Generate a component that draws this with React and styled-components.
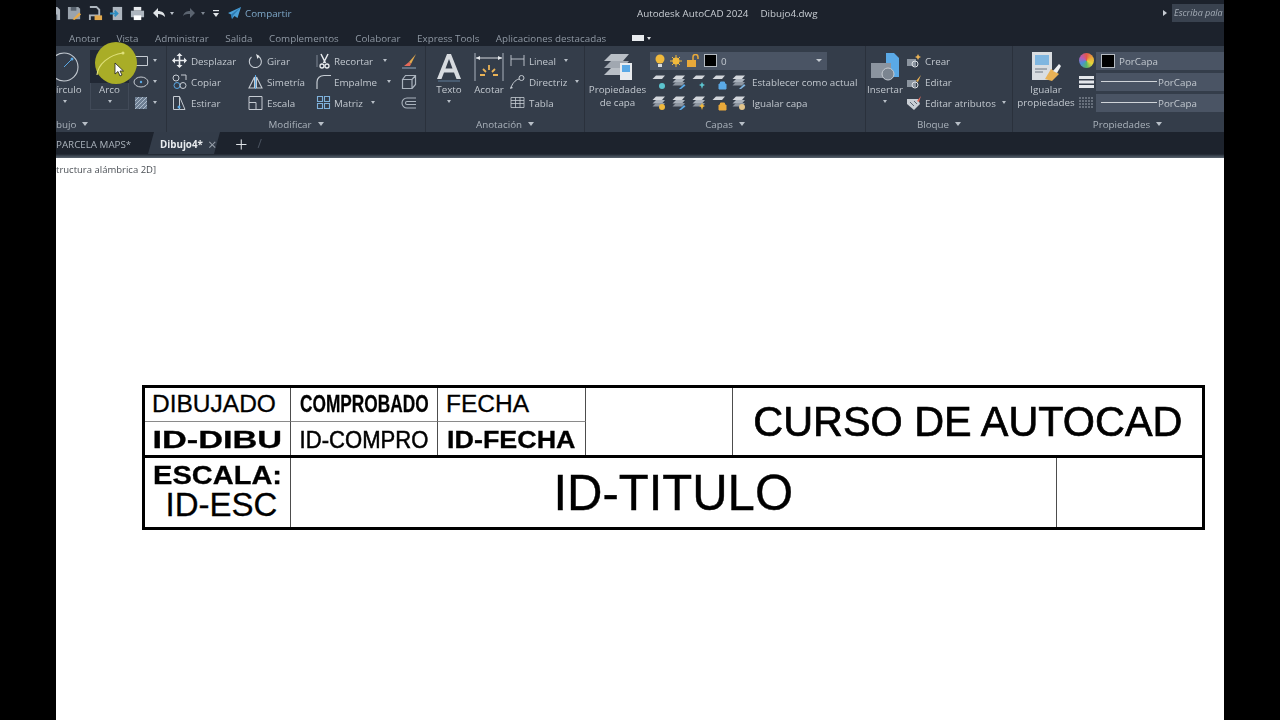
import React from "react";
import styled, { createGlobalStyle } from "styled-components";

const GlobalStyle = createGlobalStyle`
  html, body {
    margin: 0;
    height: 100%;
    background: #000;
    overflow: hidden;
    font-family: "Open Sans", "Noto Sans", sans-serif;
  }
`;

const Svg = ({ w = 16, h = 16, children }) => (
  <svg width={w} height={h} viewBox={`0 0 ${w} ${h}`} fill="none" style={{ flex: "none", display: "block" }}>
    {children}
  </svg>
);

const G = "#c5cbd2";

const icons = {
  save: <Svg><path d="M1 1h11l3 3v11H1z" fill="#aeb6bf" /><path d="M4 1h6v4H4zM4 9h8v6H4z" fill="#59636f" /></Svg>,
  saveAs: <Svg><path d="M1 1h11l2 2v11H1z" fill="#9aa3ad" /><path d="M4 1h6v4H4z" fill="#59636f" /><path d="M6 14l7-7 2 2-7 6z" fill="#e7a948" /></Svg>,
  open: <Svg><path d="M2 1h7l3 3v6H2v5" stroke="#aeb6bf" strokeWidth="2" /><path d="M7 10h8v5H7z" fill="#e2a94e" /></Svg>,
  export: <Svg><path d="M4 1h10v14H4z" fill="#aeb6bf" /><path d="M1 8h7M6 5l3 3-3 3" stroke="#2f8fc4" strokeWidth="2" /></Svg>,
  print: <Svg><path d="M4 1h8v4H4z" fill="#e8ebee" /><path d="M1 5h14v7H1z" fill="#aeb6bf" /><path d="M4 10h8v5H4z" fill="#fff" /></Svg>,
  undo: <Svg w={14} h={12}><path d="M1 6l5-5v3c4 0 7 2 7 6-2-2-4-3-7-3v4z" fill="#dfe3e7" /></Svg>,
  redo: <Svg w={14} h={12}><path d="M13 6L8 1v3C5 4 2 5 1 9c2-2 4-2 7-2v4z" fill="#5b6470" /></Svg>,
  menu: <Svg w={6} h={9}><path d="M0 1h6v1.200H0z" fill="#dfe3e7" /><path d="M0 4h6L3 8z" fill="#dfe3e7" /></Svg>,
  plane: <Svg w={15} h={14}><path d="M14 1L1 7l3 1.500 1 4.500 2.500-3 3 2z" fill="#4aa0d8" /><path d="M14 1L4 8.500l1 4.500 1-3.500z" fill="#2c78b0" /></Svg>,
  move: <Svg w={15} h={15}><path d="M7.500 1v13M1 7.500h13" stroke="#e8ebee" strokeWidth="1.600" /><path d="M7.500 0l3 3h-6zM7.500 15l-3-3h6zM0 7.500l3-3v6zM15 7.500l-3 3v-6z" fill="#e8ebee" /></Svg>,
  rotate: <Svg w={15} h={15}><path d="M10.500 3.500A6 6 0 1 1 3.500 4" stroke={G} strokeWidth="1.100" /><path d="M8 1l3.500 2-2 3z" fill="#e8ebee" /></Svg>,
  trim: <Svg w={15} h={16}><path d="M5 1l4.500 9M12 1L7.500 10" stroke="#e8ebee" strokeWidth="1.500" /><circle cx="6" cy="13" r="2" stroke="#e8ebee" strokeWidth="1.300" /><circle cx="11" cy="13" r="2" stroke="#e8ebee" strokeWidth="1.300" /><path d="M1 2v12" stroke="#7e8894" /></Svg>,
  brush: <Svg><path d="M15 1L8 9l2 2z" fill="#e2a94e" /><path d="M8 9l-5 4 6 0 1-2z" fill="#e56a5a" /><path d="M1 15h14" stroke="#8fa8bd" /></Svg>,
  copy: <Svg w={15} h={15}><circle cx="4" cy="4" r="3" stroke={G} /><path d="M9 1h5v5" stroke={G} /><circle cx="5" cy="11.500" r="3" stroke="#5aa9e6" /><circle cx="11" cy="11.500" r="3" stroke={G} /></Svg>,
  mirror: <Svg w={15} h={15}><path d="M6.500 3L1 14h5.500zM8.500 3v11H14z" stroke={G} strokeWidth="1.100" /><path d="M7.500 1v14" stroke="#5aa9e6" /></Svg>,
  fillet: <Svg w={15} h={15}><path d="M1 15V8c0-4 3-6.500 7-6.500h7" stroke={G} strokeWidth="1.200" /></Svg>,
  box3d: <Svg><path d="M1.500 5.500h9.500v9H1.500zM1.500 5.500l3-4h10v9l-3.500 4M11 5.500l3.500-4" stroke="#aab3bd" strokeWidth="1.200" /></Svg>,
  stretch: <Svg w={15} h={15}><path d="M1.500 1.500h6v13h-6z" stroke={G} /><path d="M7.500 1.500l5.500 13H7.500" stroke={G} /><circle cx="7" cy="12" r="1.500" fill="#5aa9e6" /></Svg>,
  scale: <Svg w={15} h={15}><path d="M1 7.500h7v7H1zM1 7.500v-6h13v13H8" stroke={G} strokeWidth="1" /></Svg>,
  array: <Svg w={15} h={15}><path d="M1.500 1.500h5v5h-5zM8.500 1.500h5v5h-5zM1.500 8.500h5v5h-5zM8.500 8.500h5v5h-5z" stroke="#7fb2dc" strokeWidth="1.100" /></Svg>,
  offset: <Svg><path d="M15 3H6a4 4 0 0 0 0 10h9M15 6.500H6a1.500 1.500 0 0 0 0 3h9" stroke="#aab3bd" strokeWidth="1.100" /></Svg>,
  rect: <Svg><path d="M1.500 3.500h13v9h-13z" stroke={G} /></Svg>,
  ellipse: <Svg><ellipse cx="8" cy="8" rx="7" ry="5" stroke={G} /><circle cx="8" cy="8" r="1.200" fill="#5aa9e6" /></Svg>,
  hatch: <Svg><path d="M2 2h12v12H2z" fill="#6d7e92" /><path d="M2 6l4-4M2 10l8-8M2 14L14 2M6 14l8-8M10 14l4-4" stroke="#aebccb" /></Svg>,
  linear: <Svg w={15} h={15}><path d="M1 2v11M14 2v11M1 6h13" stroke={G} strokeWidth=".9" /></Svg>,
  leader: <Svg w={15} h={15}><path d="M1 14c1-4 4-8 8-9" stroke={G} /><circle cx="11.500" cy="4" r="2.500" stroke={G} /><path d="M0 15l3-1-2-2z" fill={G} /></Svg>,
  table: <Svg w={15} h={15}><path d="M1 2.500h13v10H1zM1 5.500h13M1 8.500h13M5.500 2.500v10M10 2.500v10" stroke={G} strokeWidth=".8" /></Svg>,
  blockNew: <Svg><path d="M1 6h9v7H1z" fill="#8b949f" /><circle cx="9" cy="11" r="3" stroke="#dde1e5" /><path d="M12 1l1 2 2 1-2 1-1 2-1-2-2-1 2-1z" fill="#e9b256" /></Svg>,
  blockEdit: <Svg><path d="M1 6h9v7H1z" fill="#8b949f" /><circle cx="9" cy="11" r="3" stroke="#dde1e5" /><path d="M15 1l-5 6 2 1z" fill="#e9b256" /></Svg>,
  attrs: <Svg><path d="M1 4h11l2 5-6 6-7-6z" fill="#c9ced4" /><path d="M4 7l4 4M8 6l3 3" stroke="#5b6470" /><path d="M15 1l-4 5 2 1z" fill="#e56a5a" /></Svg>,
  weight: <Svg w={15} h={16}><path d="M0 2h15v3H0zM0 6.500h15v3H0zM0 11h15v3H0z" fill="#e3e6ea" /></Svg>,
  ltype: <Svg w={15} h={16}><path d="M0 3h15M0 6h15M0 9h15M0 12h15" stroke="#9aa3ad" strokeDasharray="2 1" /></Svg>,
};

function LayerIcon({ stacked, accent, kind }) {
  return (
    <Svg w={16} h={16}>
      {stacked && <path d="M5 5h9l-3 3.500H1.500z" fill="#aab2bc" />}
      {stacked && <path d="M5 8h9l-3 3.500H1.500z" fill="#8d96a1" />}
      <path d="M5 1.500h9L11 5H1.500z" fill="#d3d7dc" />
      {kind === "bulb" && <circle cx="11" cy="12" r="3" fill={accent} />}
      {kind === "lock" && <path d="M8 10h7v5H8zM9.500 10V8h4v2" fill={accent} stroke={accent} />}
      {kind === "sun" && <path d="M11 8l1 2 2 1-2 1-1 3-1-3-2-1 2-1z" fill={accent} />}
      {kind === "pen" && <path d="M8 15l5-5 1.500 1.500L10 15z" fill={accent} />}
    </Svg>
  );
}

const AppFrame = styled.div`
  width: 1168px;
  height: 720px;
  margin: 0 56px;
  display: flex;
  flex-direction: column;
  overflow: hidden;
  background: #fff;
  position: relative;
`;

const Chrome = styled.header`
  flex: none;
  filter: blur(0.3px);
`;

const TitleBar = styled.div`
  height: 26px;
  display: flex;
  align-items: center;
  background: #1c222c;
`;

const QuickTools = styled.div`
  width: 581px;
  flex: none;
  display: flex;
  align-items: center;
  margin-left: -10px;
  margin-right: 10px;
`;

const FileIcons = styled.div`
  display: flex;
  gap: 6px;

  svg {
    width: 15px;
    height: 15px;
  }
`;

const QuickIcon = styled.span`
  display: block;
  flex: none;
  margin-left: ${(p) => p.$ml}px;
`;

const Tiny = styled.span`
  width: 0;
  height: 0;
  flex: none;
  border-left: 2.5px solid transparent;
  border-right: 2.5px solid transparent;
  border-top: 3px solid ${(p) => p.$color || "#b8bfc7"};
  margin: ${(p) => p.$margin || "0"};
`;

const Share = styled.span`
  color: #7da7c8;
  font-size: 9.8px;
  margin-left: 3px;
`;

const AppTitle = styled.div`
  display: flex;
  gap: 12px;
  color: #c9ced4;
  font-size: 9.8px;
`;

const SearchZone = styled.div`
  margin-left: auto;
  display: flex;
  align-items: center;
  gap: 5px;
`;

const PlayMark = styled.span`
  width: 0;
  height: 0;
  border-top: 3.5px solid transparent;
  border-bottom: 3.5px solid transparent;
  border-left: 4px solid #c5cbd2;
`;

const SearchBox = styled.div`
  width: 52px;
  height: 18px;
  background: #39424f;
  color: #a4acb6;
  font-size: 9px;
  font-style: italic;
  line-height: 18px;
  padding-left: 2px;
  white-space: nowrap;
  overflow: hidden;
  box-sizing: border-box;
`;

const TabBar = styled.nav`
  height: 20px;
  display: flex;
  align-items: center;
  gap: 16.5px;
  padding: 4px 0 0 13px;
  box-sizing: border-box;
  background: #1c222c;
`;

const TabItem = styled.span`
  color: #8f98a3;
  font-size: 9.8px;
`;

const TabWidget = styled.span`
  display: flex;
  align-items: center;
  gap: 3px;
  margin-left: 9px;
`;

const WidgetChip = styled.span`
  width: 12px;
  height: 6px;
  background: #e8ebee;
`;

const Ribbon = styled.div`
  height: 86px;
  display: flex;
  background: #343d4a;
`;

const Panel = styled.section`
  width: ${(p) => p.$w}px;
  flex: none;
  display: flex;
  flex-direction: column;
  border-right: 1px solid #2a313c;
  box-sizing: border-box;
  overflow: hidden;
`;

const PanelBody = styled.div`
  height: 68px;
  padding: 4px 0 0 ${(p) => p.$pl || 0}px;
  display: flex;
  gap: ${(p) => p.$gap || 0}px;
  box-sizing: border-box;
`;

const PanelLabel = styled.div`
  height: 18px;
  display: flex;
  align-items: center;
  justify-content: ${(p) => (p.$start ? "flex-start" : "center")};
  gap: 6px;
  color: #aab2bb;
  font-size: 9.8px;
  padding: 2px 0 0 ${(p) => p.$pl || 0}px;
  box-sizing: border-box;
`;

const LabelArrow = styled.span`
  width: 0;
  height: 0;
  border-left: 3.5px solid transparent;
  border-right: 3.5px solid transparent;
  border-top: 4px solid #b8bfc7;
`;

const BigTool = styled.div`
  width: ${(p) => p.$w}px;
  flex: none;
  display: flex;
  flex-direction: column;
  align-items: ${(p) => (p.$start ? "flex-start" : "center")};
  color: #c2c8cf;
  font-size: 9.8px;
  line-height: 13px;
  text-align: center;
  white-space: nowrap;
  box-shadow: ${(p) => (p.$active ? "inset 0 0 0 1px #414a58" : "none")};
  height: ${(p) => (p.$active ? "60px" : "auto")};
  margin-left: ${(p) => p.$ml || 0}px;
`;

const BigIcon = styled.div`
  height: 33px;
  align-self: stretch;
  display: flex;
  align-items: center;
  justify-content: center;
  background: ${(p) => (p.$dark ? "#212834" : "transparent")};
`;

const ToolColumn = styled.div`
  width: ${(p) => p.$w}px;
  flex: none;
  display: flex;
  flex-direction: column;
  margin-left: ${(p) => p.$ml || 0}px;
`;

const ToolRow = styled.div`
  height: 21px;
  display: flex;
  align-items: center;
  gap: ${(p) => p.$gap ?? 4}px;
  color: #c2c8cf;
  font-size: 9.8px;
  white-space: nowrap;
`;

const RowText = styled.span`
  padding-top: 1px;
`;

const Combo = styled.div`
  width: ${(p) => p.$w}px;
  height: 18px;
  flex: none;
  background: #4a5464;
  display: flex;
  align-items: center;
  gap: ${(p) => p.$gap ?? 4}px;
  padding-left: 5px;
  box-sizing: border-box;
  color: #c2c8cf;
  font-size: 9.8px;
  position: relative;
`;

const LayerStates = styled.div`
  display: flex;
  align-items: center;
  gap: 5px;
`;

const Swatch = styled.span`
  width: ${(p) => p.$size || 13}px;
  height: ${(p) => p.$size || 13}px;
  background: #000;
  border: 1px solid #b5bbc2;
  box-sizing: border-box;
  flex: none;
`;

const ColorWheel = styled.span`
  width: 15px;
  height: 15px;
  flex: none;
  border-radius: 50%;
  background: conic-gradient(#e2574c, #e8a63a, #e8d63a, #57b56a, #4c8fd6, #b85bb5, #e2574c);
`;

const LinePreview = styled.span`
  width: 56px;
  height: 1px;
  background: #d0d4d9;
  flex: none;
`;

const ComboArrow = styled.span`
  position: absolute;
  right: 5px;
  top: 7px;
  width: 0;
  height: 0;
  border-left: 3px solid transparent;
  border-right: 3px solid transparent;
  border-top: 3px solid #c5cbd2;
`;

const LayerIcons = styled.div`
  width: 102px;
  flex: none;
  display: flex;
  justify-content: space-between;
  padding: 0 5px 0 1px;
  box-sizing: border-box;
`;

const DocBar = styled.div`
  height: 22px;
  display: flex;
  align-items: center;
  background: #1d232d;
  color: #aab2bb;
  font-size: 9.8px;
`;

const DocName = styled.span`
  width: 92px;
  flex: none;
  white-space: nowrap;
  padding-top: 2px;
`;

const ActiveDoc = styled.div`
  width: 72px;
  height: 22px;
  flex: none;
  display: flex;
  align-items: center;
  gap: 5px;
  padding: 2px 0 0 12px;
  box-sizing: border-box;
  background: #333c49;
  clip-path: polygon(6px 0, 100% 0, calc(100% - 6px) 100%, 0 100%);
  color: #e8ebee;
  font-weight: 700;
`;

const DocClose = styled.span`
  color: #98a0aa;
  font-size: 15px;
  line-height: 14px;
  font-weight: 400;
`;

const AddDoc = styled.span`
  color: #e0e4e8;
  font-size: 22px;
  font-weight: 300;
  line-height: 20px;
  margin-left: 15px;
`;

const DocSlash = styled.span`
  color: #4c5562;
  margin-left: 10px;
  font-size: 12px;
`;

const ChromeEdge = styled.div`
  height: 4px;
  background: linear-gradient(#1d232d 0, #3c4652 50%, #5a646f 100%);
`;

const Canvas = styled.main`
  flex: 1;
  background: #fff;
  display: flex;
  flex-direction: column;
`;

const ViewLabel = styled.div`
  height: 227px;
  flex: none;
  padding-top: 5px;
  box-sizing: border-box;
  color: #4a4f55;
  font-size: 9.5px;
  white-space: nowrap;
  filter: blur(0.3px);
`;

const Sheet = styled.div`
  width: 1063px;
  height: 145px;
  margin-left: 86px;
  border: 3px solid #000;
  box-sizing: border-box;
  display: flex;
  flex-direction: column;
  font-family: "Liberation Sans", Arial, sans-serif;
  color: #000;
`;

const SheetTop = styled.div`
  height: 70px;
  flex: none;
  display: grid;
  grid-template-columns: 146px 147px 148px 147px 1fr;
  grid-template-rows: 34px 1fr;
  border-bottom: 3px solid #000;
  box-sizing: border-box;
`;

const SheetBottom = styled.div`
  flex: 1;
  display: grid;
  grid-template-columns: 146px 766px 1fr;
`;

const Cell = styled.div`
  display: flex;
  flex-direction: ${(p) => (p.$stack ? "column" : "row")};
  align-items: center;
  justify-content: ${(p) => p.$justify || "center"};
  padding-left: ${(p) => p.$pl || 0}px;
  padding-top: ${(p) => p.$pt || 0}px;
  grid-row: ${(p) => (p.$tall ? "span 2" : "auto")};
  border-right: ${(p) => (p.$last ? "none" : "1px solid #4d4d4d")};
  border-bottom: ${(p) => (p.$under ? "1px solid #8a8a8a" : "none")};
  white-space: nowrap;
`;

const Lettering = styled.span`
  display: block;
  font-size: ${(p) => p.$size}px;
  font-weight: ${(p) => (p.$bold ? 700 : 400)};
  line-height: ${(p) => p.$lh || 1.1};
  transform: scaleX(${(p) => p.$sx || 1});
  margin-left: ${(p) => p.$ml || 0}px;
  -webkit-text-stroke: ${(p) => p.$stroke || 0.3}px #000;
`;

const Highlight = styled.div`
  position: absolute;
  left: 39px;
  top: 42px;
  width: 42px;
  height: 42px;
  border-radius: 50%;
  background: #a9ad27;
  filter: blur(0.4px);
`;

const Pointer = styled.div`
  position: absolute;
  left: 58px;
  top: 62px;
`;

function Row({ icon, label, arrow, gap, arrowGap }) {
  return (
    <ToolRow $gap={gap}>
      {icon}
      {label && <RowText>{label}</RowText>}
      {arrow && <Tiny $margin={`0 0 0 ${arrowGap || 7}px`} />}
    </ToolRow>
  );
}

const tabs = ["Anotar", "Vista", "Administrar", "Salida", "Complementos", "Colaborar", "Express Tools", "Aplicaciones destacadas"];

export default function App() {
  return (
    <AppFrame>
      <GlobalStyle />
      <Chrome>
        <TitleBar>
          <QuickTools>
            <FileIcons>
              {icons.save}
              {icons.saveAs}
              {icons.open}
              {icons.export}
              {icons.print}
            </FileIcons>
            <QuickIcon $ml={7}>{icons.undo}</QuickIcon>
            <Tiny $margin="0 0 0 4px" />
            <QuickIcon $ml={8}>{icons.redo}</QuickIcon>
            <Tiny $color="#7e8792" $margin="0 0 0 5px" />
            <QuickIcon $ml={8}>{icons.menu}</QuickIcon>
            <QuickIcon $ml={8}>{icons.plane}</QuickIcon>
            <Share>Compartir</Share>
          </QuickTools>
          <AppTitle>
            <span>Autodesk AutoCAD 2024</span>
            <span>Dibujo4.dwg</span>
          </AppTitle>
          <SearchZone>
            <PlayMark />
            <SearchBox>Escriba pala</SearchBox>
          </SearchZone>
        </TitleBar>
        <TabBar>
          {tabs.map((t) => (
            <TabItem key={t}>{t}</TabItem>
          ))}
          <TabWidget>
            <WidgetChip />
            <Tiny $color="#dfe3e7" />
          </TabWidget>
        </TabBar>
        <Ribbon>
          <Panel $w={111}>
            <PanelBody>
              <BigTool $w={34} $start>
                <BigIcon>
                  <Svg w={34} h={32}>
                    <circle cx="8" cy="16" r="14" stroke="#c5cbd2" strokeWidth="1.100" />
                    <path d="M8 16l8-8" stroke="#5aa9e6" />
                    <circle cx="16" cy="8" r="1.500" fill="#5aa9e6" />
                  </Svg>
                </BigIcon>
                <span>írculo</span>
                <Tiny $margin="4px 0 0 7px" />
              </BigTool>
              <BigTool $w={39} $active>
                <BigIcon $dark />
                <span>Arco</span>
                <Tiny $margin="4px 0 0 0" />
              </BigTool>
              <ToolColumn $w={28} $ml={4}>
                <Row icon={icons.rect} arrow arrowGap={4} gap={0} />
                <Row icon={icons.ellipse} arrow arrowGap={4} gap={0} />
                <Row icon={icons.hatch} arrow arrowGap={4} gap={0} />
              </ToolColumn>
            </PanelBody>
            <PanelLabel $start>
              <span>bujo</span>
              <LabelArrow />
            </PanelLabel>
          </Panel>
          <Panel $w={259}>
            <PanelBody $pl={5}>
              <ToolColumn $w={76}>
                <Row icon={icons.move} label="Desplazar" />
                <Row icon={icons.copy} label="Copiar" />
                <Row icon={icons.stretch} label="Estirar" />
              </ToolColumn>
              <ToolColumn $w={68}>
                <Row icon={icons.rotate} label="Girar" />
                <Row icon={icons.mirror} label="Simetría" />
                <Row icon={icons.scale} label="Escala" />
              </ToolColumn>
              <ToolColumn $w={85}>
                <Row icon={icons.trim} label="Recortar" arrow gap={3} />
                <Row icon={icons.fillet} label="Empalme" arrow gap={3} />
                <Row icon={icons.array} label="Matriz" arrow arrowGap={5} gap={3} />
              </ToolColumn>
              <ToolColumn $w={18}>
                <Row icon={icons.brush} />
                <Row icon={icons.box3d} />
                <Row icon={icons.offset} />
              </ToolColumn>
            </PanelBody>
            <PanelLabel>
              <span>Modificar</span>
              <LabelArrow />
            </PanelLabel>
          </Panel>
          <Panel $w={159}>
            <PanelBody $pl={8}>
              <BigTool $w={30}>
                <BigIcon>
                  <Svg w={24} h={30}>
                    <path fillRule="evenodd" d="M10 2h4l10 25h-4.500l-2.500-6.500H7L4.500 27H0zM8.500 16.500h7L12 7z" fill="#d7dbdf" />
                    <path d="M1 29h22" stroke="#5f7d98" />
                  </Svg>
                </BigIcon>
                <span>Texto</span>
                <Tiny $margin="4px 0 0 0" />
              </BigTool>
              <BigTool $w={34} $ml={8}>
                <BigIcon>
                  <Svg w={30} h={30}>
                    <path d="M1 1v28M29 1v28" stroke="#aab3bd" />
                    <path d="M2 6h26" stroke="#d4d8dc" />
                    <path d="M2 6l4-2v4zM28 6l-4-2v4z" fill="#e8ebee" />
                    <path d="M15 13v5M9 17l3 3M21 17l-3 3M6 23h5M19 23h5" stroke="#e9b256" strokeWidth="1.800" />
                  </Svg>
                </BigIcon>
                <span>Acotar</span>
              </BigTool>
              <ToolColumn $w={76} $ml={4}>
                <Row icon={icons.linear} label="Lineal" arrow arrowGap={4} />
                <Row icon={icons.leader} label="Directriz" arrow arrowGap={4} />
                <Row icon={icons.table} label="Tabla" />
              </ToolColumn>
            </PanelBody>
            <PanelLabel>
              <span>Anotación</span>
              <LabelArrow />
            </PanelLabel>
          </Panel>
          <Panel $w={281}>
            <PanelBody>
              <BigTool $w={65}>
                <BigIcon>
                  <Svg w={30} h={30}>
                    <path d="M8 2h18l-6 7H1z" fill="#b9bfc6" />
                    <path d="M8 9h18l-6 7H1z" fill="#a1a8b1" />
                    <path d="M8 16h18l-6 7H1z" fill="#b9bfc6" />
                    <path d="M17 11h12v17H17z" fill="#e8ebee" />
                    <path d="M19 13h8v7h-8z" fill="#5aa9e6" />
                  </Svg>
                </BigIcon>
                <span>Propiedades</span>
                <span>de capa</span>
              </BigTool>
              <ToolColumn $w={214}>
                <ToolRow>
                  <Combo $w={177}>
                    <LayerStates>
                      <Svg w={10} h={14}><circle cx="5" cy="5" r="4.500" fill="#f0b93c" /><path d="M3 10h4v3H3z" fill="#d7dbdf" /></Svg>
                      <Svg w={12} h={12}><circle cx="6" cy="6" r="3.500" fill="#f0b93c" /><path d="M6 0v12M0 6h12M2 2l8 8M10 2l-8 8" stroke="#f0b93c" /></Svg>
                      <Svg w={12} h={13}><path d="M0 6h9v7H0z" fill="#e9a93a" /><path d="M6 6V3a2.500 2.500 0 0 1 5 0v2" stroke="#e9a93a" strokeWidth="1.500" /></Svg>
                      <Swatch />
                    </LayerStates>
                    <RowText>0</RowText>
                    <ComboArrow />
                  </Combo>
                </ToolRow>
                <ToolRow $gap={0}>
                  <LayerIcons>
                    <LayerIcon kind="bulb" accent="#5cc4cf" />
                    <LayerIcon stacked kind="pen" accent="#5aa9e6" />
                    <LayerIcon kind="sun" accent="#5cc4cf" />
                    <LayerIcon kind="lock" accent="#5aa9e6" />
                    <LayerIcon stacked kind="pen" accent="#7fb2dc" />
                  </LayerIcons>
                  <RowText>Establecer como actual</RowText>
                </ToolRow>
                <ToolRow $gap={0}>
                  <LayerIcons>
                    <LayerIcon stacked kind="bulb" accent="#f0b93c" />
                    <LayerIcon stacked kind="pen" accent="#5aa9e6" />
                    <LayerIcon stacked kind="sun" accent="#f0b93c" />
                    <LayerIcon kind="lock" accent="#e9a93a" />
                    <LayerIcon stacked kind="bulb" accent="#e2c48a" />
                  </LayerIcons>
                  <RowText>Igualar capa</RowText>
                </ToolRow>
              </ToolColumn>
            </PanelBody>
            <PanelLabel>
              <span>Capas</span>
              <LabelArrow />
            </PanelLabel>
          </Panel>
          <Panel $w={147}>
            <PanelBody $gap={2}>
              <BigTool $w={38}>
                <BigIcon>
                  <Svg w={30} h={30}>
                    <path d="M16 1h8l5 5v19H16z" fill="#5aa9e6" />
                    <path d="M1 11h20v15H1z" fill="#8b949f" />
                    <circle cx="18" cy="22" r="6" fill="#7b8590" stroke="#c5cbd2" />
                  </Svg>
                </BigIcon>
                <span>Insertar</span>
                <Tiny $margin="4px 0 0 0" />
              </BigTool>
              <ToolColumn $w={104}>
                <Row icon={icons.blockNew} label="Crear" gap={3} />
                <Row icon={icons.blockEdit} label="Editar" gap={3} />
                <Row icon={icons.attrs} label="Editar atributos" arrow arrowGap={3} gap={3} />
              </ToolColumn>
            </PanelBody>
            <PanelLabel>
              <span>Bloque</span>
              <LabelArrow />
            </PanelLabel>
          </Panel>
          <Panel $w={212}>
            <PanelBody $pl={2} $gap={2}>
              <BigTool $w={62}>
                <BigIcon>
                  <Svg w={30} h={32}>
                    <path d="M1 1h20v28H1z" fill="#d9dde1" />
                    <path d="M4 4h14v10H4z" fill="#7fb6e0" />
                    <path d="M4 18h12M4 21h8" stroke="#6b7480" />
                    <path d="M14 28l6-10 8 5-7 7z" fill="#e9b256" />
                    <path d="M22 20l6-7 2 2-4 7z" fill="#eef0f2" />
                  </Svg>
                </BigIcon>
                <span>Igualar</span>
                <span>propiedades</span>
              </BigTool>
              <ToolColumn $w={146}>
                <ToolRow $gap={2}>
                  <ColorWheel />
                  <Combo $w={128}>
                    <Swatch $size={14} />
                    <RowText>PorCapa</RowText>
                  </Combo>
                </ToolRow>
                <ToolRow $gap={2}>
                  {icons.weight}
                  <Combo $w={128} $gap={1}>
                    <LinePreview />
                    <RowText>PorCapa</RowText>
                  </Combo>
                </ToolRow>
                <ToolRow $gap={2}>
                  {icons.ltype}
                  <Combo $w={128} $gap={1}>
                    <LinePreview />
                    <RowText>PorCapa</RowText>
                  </Combo>
                </ToolRow>
              </ToolColumn>
            </PanelBody>
            <PanelLabel $pl={18}>
              <span>Propiedades</span>
              <LabelArrow />
            </PanelLabel>
          </Panel>
        </Ribbon>
        <DocBar>
          <DocName>PARCELA MAPS*</DocName>
          <ActiveDoc>
            <span>Dibujo4*</span>
            <DocClose>×</DocClose>
          </ActiveDoc>
          <AddDoc>+</AddDoc>
          <DocSlash>/</DocSlash>
        </DocBar>
        <ChromeEdge />
      </Chrome>
      <Canvas>
        <ViewLabel>tructura alámbrica 2D]</ViewLabel>
        <Sheet>
          <SheetTop>
            <Cell $under $justify="flex-start" $pl={7}><Lettering $size={24.5}>DIBUJADO</Lettering></Cell>
            <Cell $under><Lettering $size={24} $bold $sx={0.72}>COMPROBADO</Lettering></Cell>
            <Cell $under $justify="flex-start" $pl={8}><Lettering $size={24.5}>FECHA</Lettering></Cell>
            <Cell $tall />
            <Cell $tall $last $pt={1}><Lettering $size={42} $sx={0.985} $stroke={0.7}>CURSO DE AUTOCAD</Lettering></Cell>
            <Cell $pt={3}><Lettering $size={24} $bold $sx={1.43}>ID-DIBU</Lettering></Cell>
            <Cell $pt={3}><Lettering $size={24} $sx={0.92} $stroke={0.5}>ID-COMPRO</Lettering></Cell>
            <Cell $pt={3}><Lettering $size={24} $bold $sx={1.12}>ID-FECHA</Lettering></Cell>
          </SheetTop>
          <SheetBottom>
            <Cell $stack $justify="flex-start" $pt={5}>
              <Lettering $size={25} $bold $sx={1.16} $lh={1}>ESCALA:</Lettering>
              <Lettering $size={33} $lh={1} $ml={8}>ID-ESC</Lettering>
            </Cell>
            <Cell $pt={2}><Lettering $size={50} $sx={0.98} $stroke={0.4}>ID-TITULO</Lettering></Cell>
            <Cell $last />
          </SheetBottom>
        </Sheet>
      </Canvas>
      <Highlight>
        <Svg w={42} h={42}>
          <path d="M2 33C3 22 14 13 28 11" stroke="#dfe07a" strokeWidth="1.200" />
          <circle cx="28" cy="11" r="1.500" fill="#dfe07a" />
        </Svg>
      </Highlight>
      <Pointer>
        <Svg w={10} h={15}>
          <path d="M1 1v11l3-2.500L6 14l2-1-2-4h3.500z" fill="#fff" stroke="#222" strokeWidth=".8" />
        </Svg>
      </Pointer>
    </AppFrame>
  );
}
